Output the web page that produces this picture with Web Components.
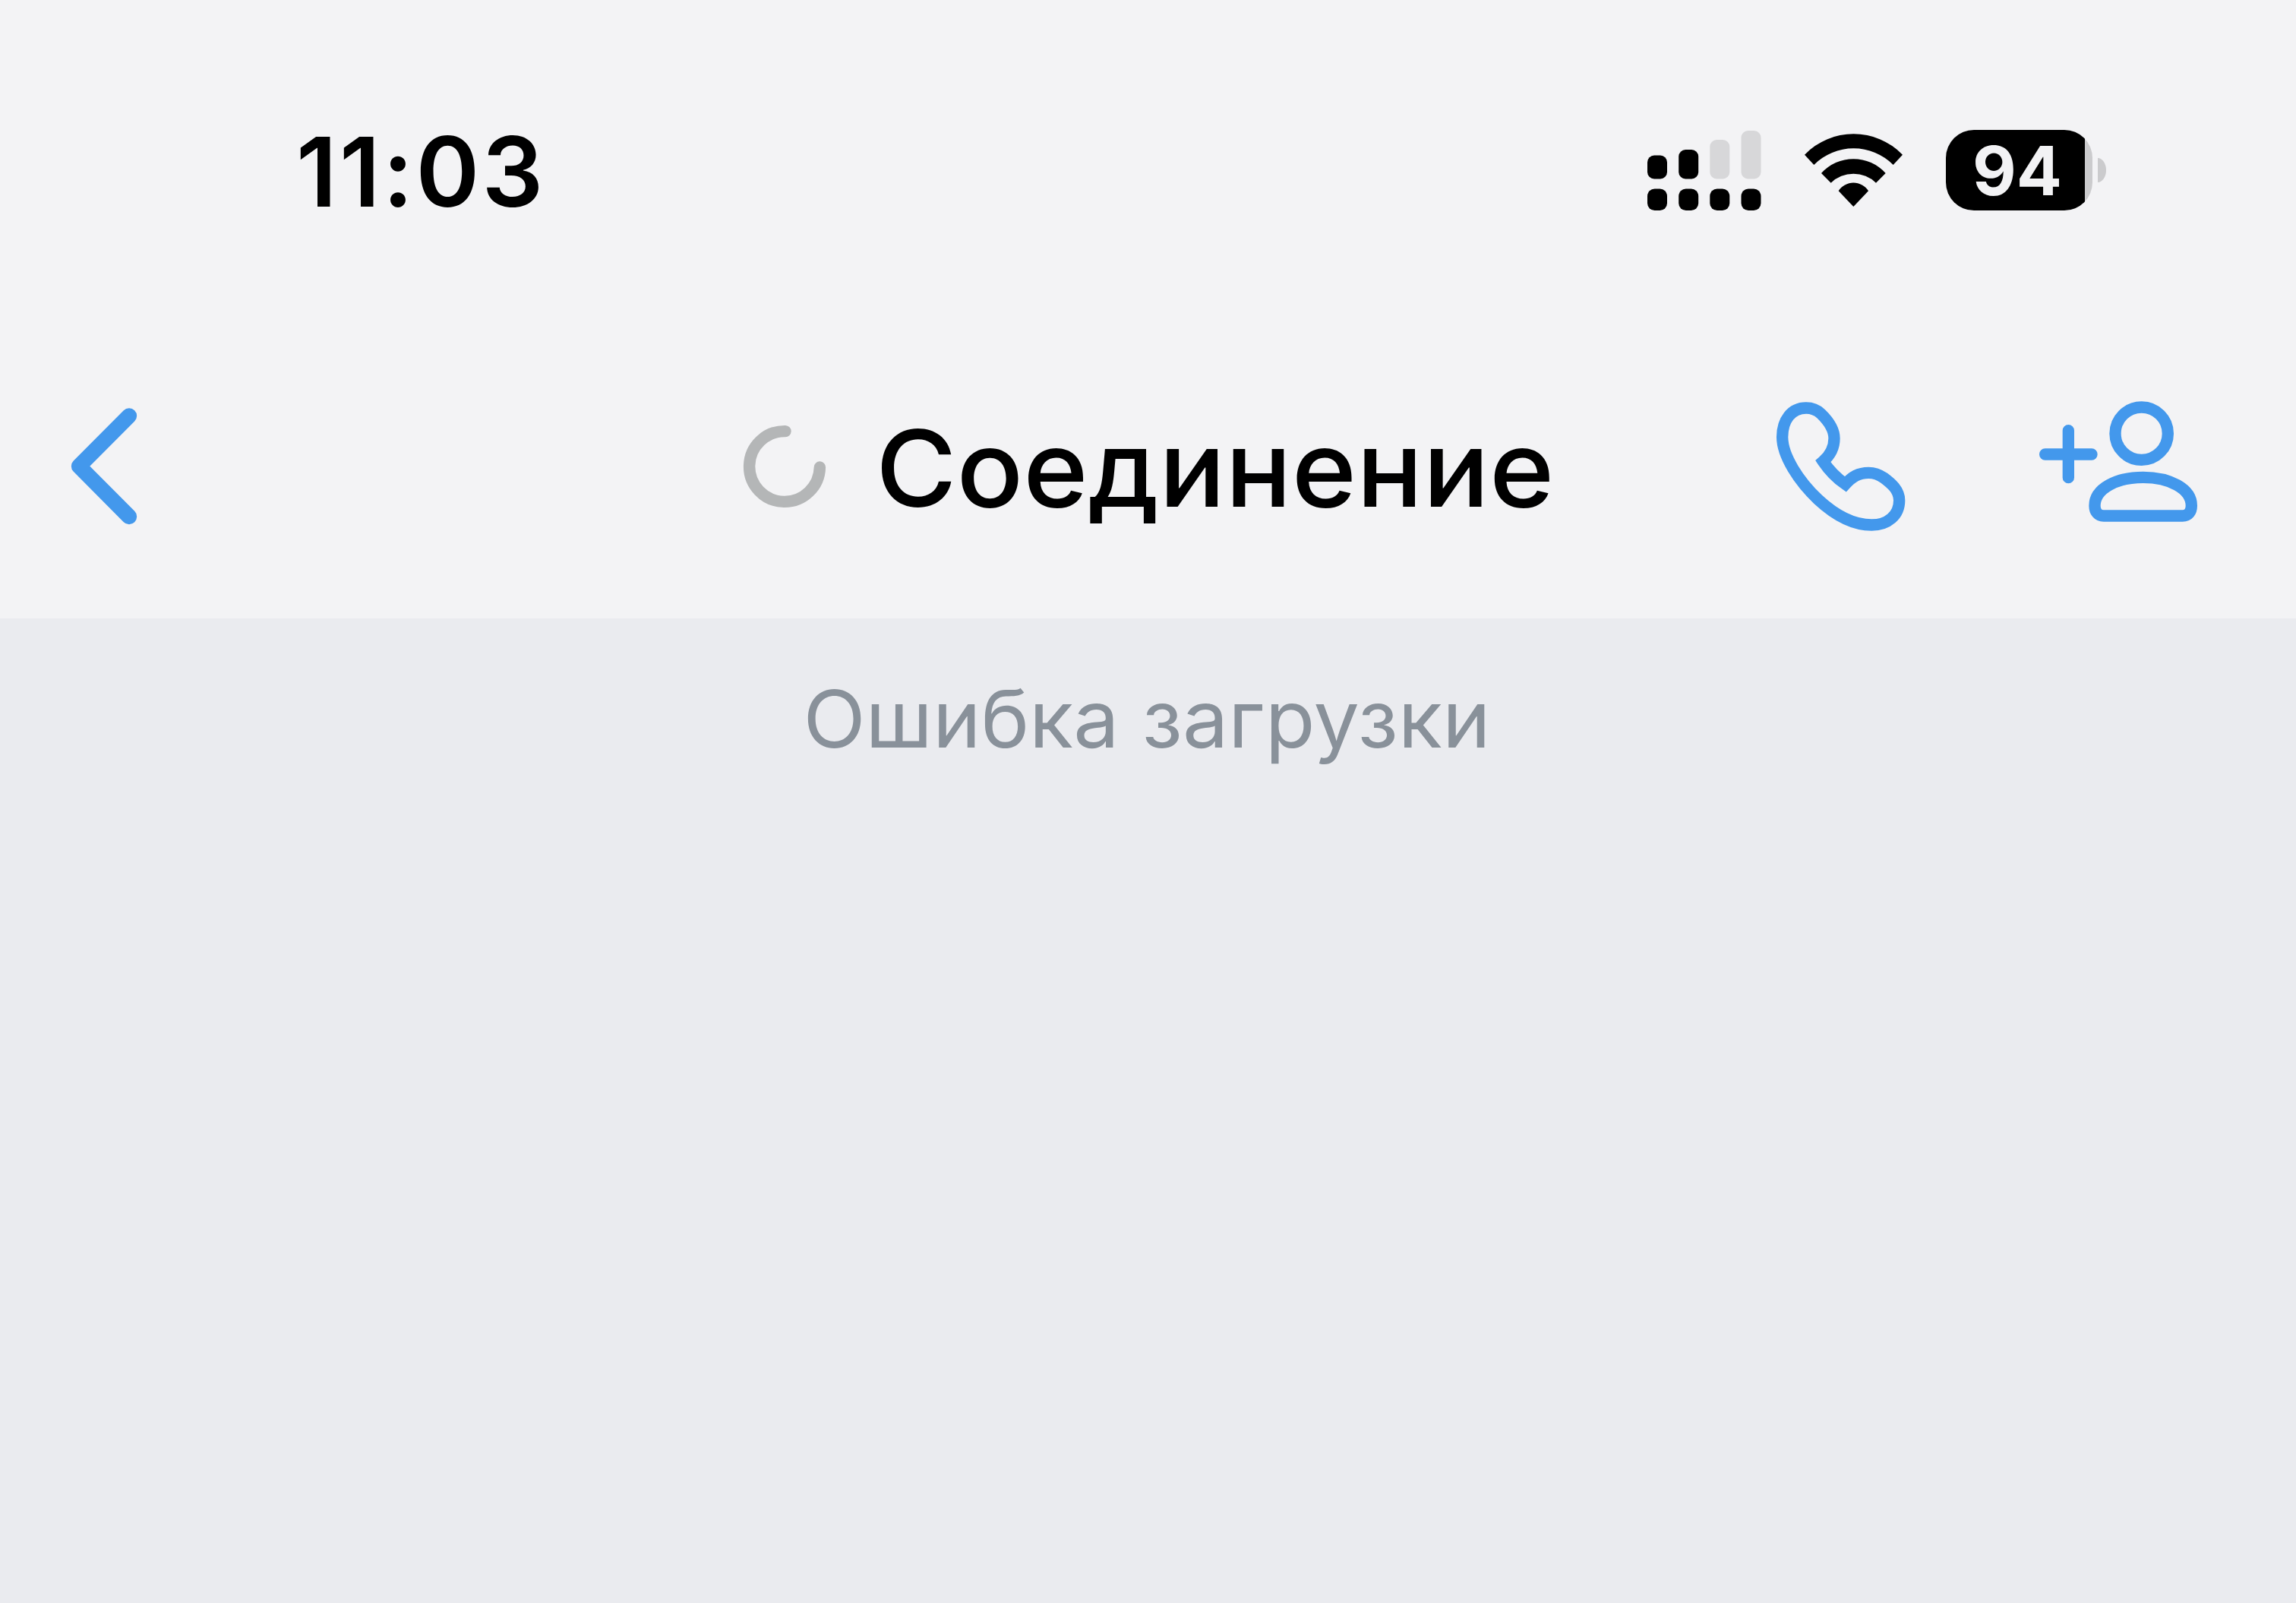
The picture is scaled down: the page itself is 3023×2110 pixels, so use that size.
<!DOCTYPE html>
<html lang="ru">
<head>
<meta charset="utf-8">
<title>Соединение</title>
<style>
    body {
        margin: 0;
        font-family: Inter, "Liberation Sans", sans-serif;
        background-color: #eaebef;
    }
</style>
</head>
<body>
<chat-screen>
    <status-line slot="header" time="11:03">
        <cell-signal></cell-signal>
        <wifi-signal></wifi-signal>
        <battery-level value="94"></battery-level>
    </status-line>
    <nav-bar slot="header">
        <nav-icon slot="start" name="back"></nav-icon>
        <loading-title>Соединение</loading-title>
        <nav-icon slot="end" name="call"></nav-icon>
        <nav-icon slot="end" name="invite"></nav-icon>
    </nav-bar>
    <chat-notice>Ошибка загрузки</chat-notice>
</chat-screen>

<script>
class ChatScreen extends HTMLElement {
    constructor() {
        super();
        this.attachShadow({ mode: "open" });
        this.shadowRoot.innerHTML = `
        <style>
            :host {
                display: flex;
                flex-direction: column;
                height: 100vh;
                overflow: hidden;
                background-color: #eaebef;
            }

            header {
                display: flex;
                flex-direction: column;
                flex: none;
                height: 814px;
                background-color: #f3f3f5;
            }

            main {
                flex-grow: 1;
            }
        </style>
        <header><slot name="header"></slot></header>
        <main><slot></slot></main>
        `;
    }
}

class StatusLine extends HTMLElement {
    constructor() {
        super();
        this.attachShadow({ mode: "open" });
        this.shadowRoot.innerHTML = `
        <style>
            :host {
                display: flex;
                align-items: center;
                justify-content: space-between;
                box-sizing: border-box;
                height: 413px;
                padding: 35px 250px 0 390px;
            }

            #time {
                padding-top: 4px;
                font-size: 127px;
                line-height: 150px;
                font-weight: 600;
                letter-spacing: 3.2px;
                color: #000;
            }

            #indicators {
                display: flex;
                align-items: center;
            }
        </style>
        <span id="time"></span>
        <div id="indicators"><slot></slot></div>
        `;
        this._time = this.shadowRoot.querySelector("#time");
    }

    connectedCallback() {
        this._time.innerText = this.getAttribute("time");
    }
}

class CellSignal extends HTMLElement {
    constructor() {
        super();
        this.attachShadow({ mode: "open" });
        // Two SIMs: bars on top, dots for the second line below.
        this.shadowRoot.innerHTML = `
        <style>
            :host {
                display: block;
                margin-right: 57px;
            }

            svg {
                display: block;
            }

            .off {
                fill: #d7d7d9;
            }
        </style>
        <svg width="150" height="106" viewBox="0 0 150 106">
            <rect x="0" y="33.5" width="26" height="31" rx="9"/>
            <rect x="41.2" y="26" width="26" height="38.5" rx="9"/>
            <rect class="off" x="82.3" y="13" width="26" height="51.5" rx="9"/>
            <rect class="off" x="123.5" y="1" width="26" height="63.5" rx="9"/>
            <rect x="0" y="77.5" width="26" height="28.5" rx="9.5"/>
            <rect x="41.2" y="77.5" width="26" height="28.5" rx="9.5"/>
            <rect x="82.3" y="77.5" width="26" height="28.5" rx="9.5"/>
            <rect x="123.5" y="77.5" width="26" height="28.5" rx="9.5"/>
        </svg>
        `;
    }
}

class WifiSignal extends HTMLElement {
    constructor() {
        super();
        this.attachShadow({ mode: "open" });
        this.shadowRoot.innerHTML = `
        <style>
            :host {
                display: block;
                margin-right: 57px;
            }

            svg {
                display: block;
            }
        </style>
        <svg width="129" height="96" viewBox="708 79 387 288">
            <path d="M708 162A269 269 0 0 1 1095 162L1058 202A221 221 0 0 0 745 202Z"/>
            <path d="M774 235A171 171 0 0 1 1028 235L990 273A128 128 0 0 0 812 273Z"/>
            <path d="M842 305A70 70 0 0 1 960 305L901 367Z"/>
        </svg>
        `;
    }
}

class BatteryLevel extends HTMLElement {
    constructor() {
        super();
        this.attachShadow({ mode: "open" });
        this.shadowRoot.innerHTML = `
        <style>
            :host {
                display: flex;
                align-items: center;
                gap: 7px;
            }

            #case {
                display: flex;
                align-items: center;
                box-sizing: border-box;
                width: 193px;
                height: 106px;
                padding: 1px 0 0 35px;
                border-radius: 37px;
                background: linear-gradient(to right, #000 183px, #cbcbcd 183px);
            }

            #value {
                font-size: 89px;
                line-height: 105px;
                font-weight: 700;
                color: #f2f2f4;
            }

            #cap {
                width: 11px;
                height: 32px;
                border-radius: 0 11px 11px 0 / 0 16px 16px 0;
                background-color: #cbcbcd;
            }
        </style>
        <div id="case"><span id="value"></span></div>
        <div id="cap"></div>
        `;
        this._value = this.shadowRoot.querySelector("#value");
    }

    connectedCallback() {
        this._value.innerText = this.getAttribute("value");
    }
}

class NavBar extends HTMLElement {
    constructor() {
        super();
        this.attachShadow({ mode: "open" });
        this.shadowRoot.innerHTML = `
        <style>
            :host {
                display: grid;
                grid-template-columns: minmax(0, 1fr) auto minmax(0, 1fr);
                align-items: center;
                height: 401px;
            }

            #start {
                display: flex;
                padding-left: 93px;
            }

            #end {
                display: flex;
                align-items: center;
                justify-content: flex-end;
                gap: 176px;
                padding-right: 130px;
            }

            ::slotted([name="invite"]) {
                padding-bottom: 11px;
            }
        </style>
        <div id="start"><slot name="start"></slot></div>
        <slot></slot>
        <div id="end"><slot name="end"></slot></div>
        `;
    }
}

const ICONS = {
    back: `
        <svg width="88" height="154" viewBox="70 80 264 462" stroke-width="61">
            <path d="M301 111L103 310L301 509"/>
        </svg>`,
    call: `
        <svg width="170" height="170" viewBox="86 86 510 510" stroke-width="46" style="stroke-linejoin: miter">
            <path d="M203 110C145 110 109 158 109 225C109 300 175 400 250 471C320 536 390 572 462 572C525 572 571 534 571 475C571 435 540 408 510 386C490 372 470 366 450 366C410 366 385 381 358 411C325 388 295 358 270 321C300 295 314 265 314 230C314 195 290 160 262 133C245 117 225 110 203 110Z"/>
        </svg>`,
    invite: `
        <svg width="208" height="160" viewBox="76 85 624 480" stroke-width="46">
            <path d="M99 295H283M191 201V387"/>
            <circle cx="480" cy="213" r="104"/>
            <path d="M330 538H642C665 538 677 522 677 498C677 430 590 386 486 386C382 386 295 430 295 498C295 522 308 538 330 538Z"/>
        </svg>`
};

class NavIcon extends HTMLElement {
    constructor() {
        super();
        this.attachShadow({ mode: "open" });
    }

    connectedCallback() {
        this.shadowRoot.innerHTML = `
        <style>
            :host {
                display: block;
            }

            svg {
                display: block;
                fill: none;
                stroke: #4398ec;
                stroke-linecap: round;
                stroke-linejoin: round;
            }
        </style>
        ${ICONS[this.getAttribute("name")]}
        `;
    }
}

class LoadingTitle extends HTMLElement {
    constructor() {
        super();
        this.attachShadow({ mode: "open" });
        this.shadowRoot.innerHTML = `
        <style>
            :host {
                display: flex;
                align-items: center;
                gap: 65px;
                margin-right: 31px;
            }

            svg {
                display: block;
                fill: none;
                stroke: #b4b6b7;
                stroke-width: 15.4;
                stroke-linecap: round;
            }

            /* Slightly extended face, grows to the right of the spinner */
            #title {
                padding-top: 4px;
                font-size: 140px;
                line-height: 170px;
                font-weight: 460;
                color: #000;
                white-space: nowrap;
                transform: scaleX(1.038);
                transform-origin: left;
            }
        </style>
        <svg width="110" height="110" viewBox="0 0 110 110">
            <path d="M56 8.6A46.4 46.4 0 1 0 101.4 56"/>
        </svg>
        <span id="title"><slot></slot></span>
        `;
    }
}

class ChatNotice extends HTMLElement {
    constructor() {
        super();
        this.attachShadow({ mode: "open" });
        this.shadowRoot.innerHTML = `
        <style>
            :host {
                display: block;
                padding: 67px 3px 0 0;
                font-size: 105px;
                line-height: 130px;
                text-align: center;
                color: #89919a;
                transform: scaleX(1.023);
            }
        </style>
        <slot></slot>
        `;
    }
}

customElements.define("chat-screen", ChatScreen);
customElements.define("status-line", StatusLine);
customElements.define("cell-signal", CellSignal);
customElements.define("wifi-signal", WifiSignal);
customElements.define("battery-level", BatteryLevel);
customElements.define("nav-bar", NavBar);
customElements.define("nav-icon", NavIcon);
customElements.define("loading-title", LoadingTitle);
customElements.define("chat-notice", ChatNotice);
</script>
</body>
</html>
